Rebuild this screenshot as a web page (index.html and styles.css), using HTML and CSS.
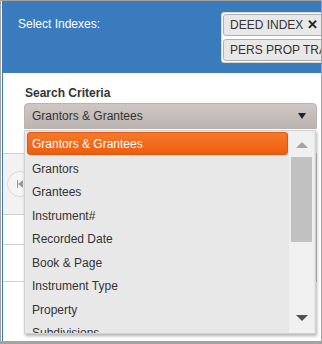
FILE: index.html
```html
<!DOCTYPE html>
<html lang="en">
<head>
  <meta charset="UTF-8">
  <meta name="viewport" content="width=device-width, initial-scale=1.0">
  <title>Search</title>
  <link rel="stylesheet" href="styles.css">
</head>
<body>
  <div class="window">
    <div class="panel">

      <div class="header">
        <div class="header-label">Select Indexes:</div>
        <div class="tags">
          <div class="tag">DEED INDEX <span class="tag-x">&#10005;</span></div>
          <div class="tag">PERS PROP TRANSFER</div>
        </div>
      </div>

      <div class="criteria">
        <div class="criteria-label">Search Criteria</div>
        <div class="combo">
          <div class="combo-box">
            <span>Grantors &amp; Grantees</span>
            <span class="combo-arrow"></span>
          </div>

          <!-- open dropdown list, lies over the results grid -->
          <div class="dropdown">
            <div class="options">
              <div class="option selected">Grantors &amp; Grantees</div>
              <div class="option">Grantors</div>
              <div class="option">Grantees</div>
              <div class="option">Instrument#</div>
              <div class="option">Recorded Date</div>
              <div class="option">Book &amp; Page</div>
              <div class="option">Instrument Type</div>
              <div class="option">Property</div>
              <div class="option">Subdivisions</div>
            </div>
            <div class="scrollbar">
              <div class="scroll-up"></div>
              <div class="scroll-thumb"></div>
              <div class="scroll-down"></div>
            </div>
          </div>
        </div>
      </div>

      <div class="grid">
        <div class="grid-toolbar">
          <div class="pager-btn"><span class="pager-bar"></span><span class="pager-tri"></span></div>
        </div>
        <div class="grid-row"></div>
        <div class="grid-row tall"></div>
      </div>

    </div>
  </div>
</body>
</html>
```

FILE: styles.css
```css
body {
  margin: 0;
  font-family: "Liberation Sans", Arial, sans-serif;
  color: #333;
}
.window {
  box-sizing: border-box;
  width: 322px;
  height: 344px;
  border: 1px solid #a3a3a3;
  border-bottom-width: 3px;
  background: #fff;
  overflow: hidden;
}
.panel {
  margin-left: 1px;
  height: 100%;
  border-left: 1px solid #3a7bbd;
}
.header {
  display: flex;
  height: 72px;
  background: #3a7bbd;
  padding-left: 15px;
}
.header-label {
  width: 203px;
  flex: 0 0 auto;
  padding-top: 16px;
  font-size: 12px;
  line-height: 14px;
  color: #fff;
}
.tags {
  flex: 0 0 auto;
  width: 130px;
  margin-top: 11px;
  align-self: flex-start;
  padding: 1px;
  border: 1px solid #d6d6d6;
  border-radius: 3px;
  background: #fff;
}
.tag {
  box-sizing: border-box;
  height: 22px;
  margin-bottom: 3px;
  padding: 0 6px;
  border: 1px solid #b0b0b0;
  border-radius: 3px;
  background: #e8e8e8;
  font-size: 12px;
  line-height: 20px;
  color: #333;
  white-space: nowrap;
}
.tag:last-child {
  margin-bottom: 0;
}
.tag-x {
  font-size: 13px;
  font-weight: bold;
  color: #222;
}
.criteria {
  padding: 13px 4px 0 21px;
}
.criteria-label {
  font-size: 12px;
  font-weight: bold;
  line-height: 14px;
  padding-left: 1px;
  margin-bottom: 3px;
}
.combo {
  position: relative;
}
.combo-box {
  box-sizing: border-box;
  display: flex;
  align-items: center;
  justify-content: space-between;
  height: 26px;
  padding: 0 10px 0 7px;
  border: 1px solid #bab3b0;
  border-radius: 4px 4px 0 0;
  background: linear-gradient(#cdc6c3, #bcb4b1);
  font-size: 12px;
}
.combo-arrow {
  width: 0;
  height: 0;
  border-left: 4px solid transparent;
  border-right: 4px solid transparent;
  border-top: 6px solid #1c2230;
}
.dropdown {
  position: absolute;
  top: 27px;
  left: 0;
  width: 292px;
  height: 204px;
  display: flex;
  background: #e8e8e8;
  border: 1px solid #d2d2d2;
  box-sizing: border-box;
  box-shadow: 1px 2px 3px rgba(0, 0, 0, 0.3);
  z-index: 2;
}
.options {
  flex: 1;
  padding: 1px 1px 0 2px;
  overflow: hidden;
}
.option {
  height: 23.5px;
  line-height: 27px;
  padding-left: 5px;
  font-size: 12px;
  color: #333;
  white-space: nowrap;
}
.option.selected {
  box-sizing: border-box;
  height: 23px;
  margin-bottom: 0.5px;
  border: 1px solid #e0560a;
  border-radius: 3px;
  background: linear-gradient(#f47a2c, #ef5d0e);
  color: #fff;
  line-height: 22px;
  padding-left: 4px;
}
.scrollbar {
  width: 25px;
  margin: 0 1px 0 0;
  display: flex;
  flex-direction: column;
  align-items: center;
  background: #f0f0f0;
}
.scroll-up {
  margin-top: 11px;
  width: 0;
  height: 0;
  border-left: 6px solid transparent;
  border-right: 6px solid transparent;
  border-bottom: 6px solid #a3a3a3;
}
.scroll-thumb {
  width: 21px;
  height: 85px;
  margin-top: 9px;
  background: #c1c1c1;
}
.scroll-down {
  margin-top: auto;
  margin-bottom: 12px;
  width: 0;
  height: 0;
  border-left: 6px solid transparent;
  border-right: 6px solid transparent;
  border-top: 6px solid #505050;
}
.grid {
  margin: 24px 4px 0 0;
  border-right: 1px solid #c8c8c8;
}
.grid-toolbar {
  height: 60px;
  border-top: 1px solid #d0d0d0;
  border-bottom: 1px solid #d0d0d0;
  background: #f2f2f2;
  display: flex;
  align-items: center;
  padding-left: 4px;
}
.pager-btn {
  box-sizing: border-box;
  width: 26px;
  height: 26px;
  border: 1px solid #d8d8d8;
  border-radius: 50%;
  background: #f4f4f4;
  display: flex;
  align-items: center;
  justify-content: center;
}
.pager-bar {
  width: 1px;
  height: 8px;
  background: #9a9a9a;
}
.pager-tri {
  width: 0;
  height: 0;
  border-top: 4px solid transparent;
  border-bottom: 4px solid transparent;
  border-right: 5px solid #9a9a9a;
}
.grid-row {
  height: 29px;
  border-bottom: 1px solid #d0d0d0;
}
.grid-row.tall {
  height: 36px;
}
```
